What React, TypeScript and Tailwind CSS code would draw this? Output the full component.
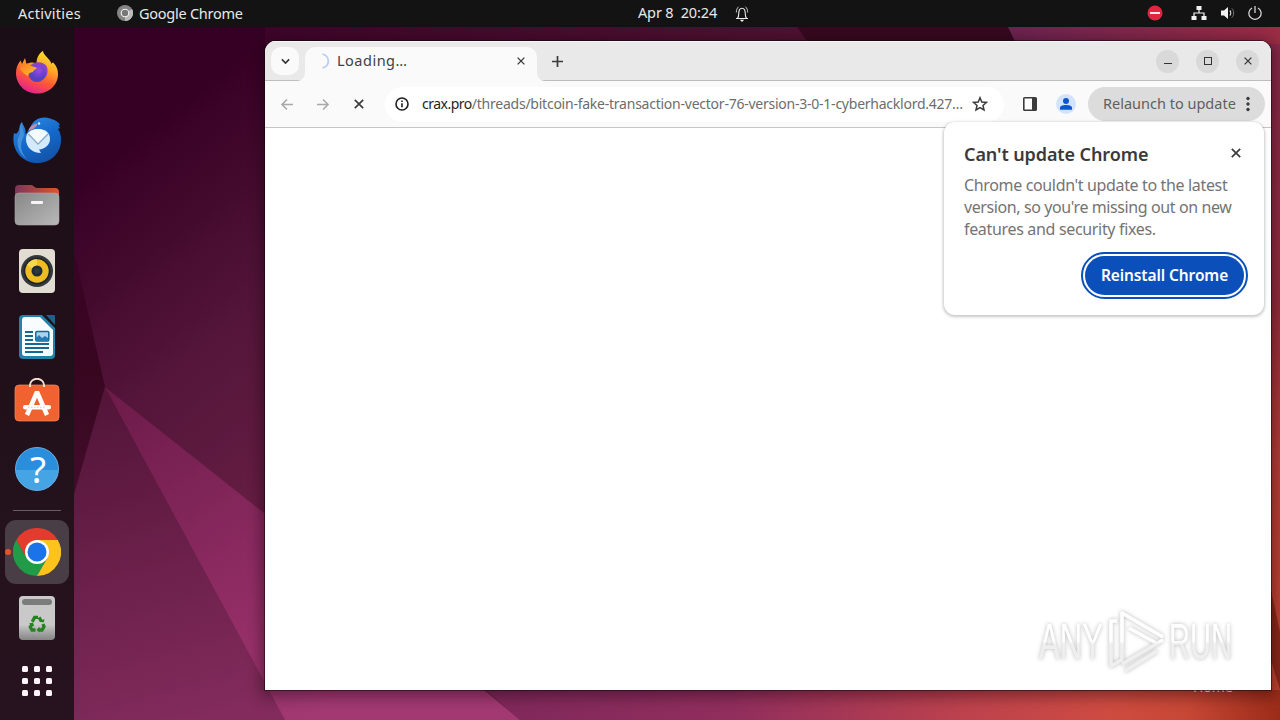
import type { ReactNode } from 'react';

const Wallpaper = () => (
  <svg className="absolute inset-0" width="1280" height="720" viewBox="0 0 1280 720">
    <defs>
      <linearGradient id="wall-base" gradientUnits="userSpaceOnUse" x1="120" y1="150" x2="430" y2="550">
        <stop offset="0" stopColor="#360024" />
        <stop offset=".4" stopColor="#531539" />
        <stop offset="1" stopColor="#75244c" />
      </linearGradient>
      <linearGradient id="wall-low" gradientUnits="userSpaceOnUse" x1="110" y1="400" x2="200" y2="720">
        <stop offset="0" stopColor="#541539" />
        <stop offset="1" stopColor="#822b5c" />
      </linearGradient>
      <linearGradient id="wall-wedge" gradientUnits="userSpaceOnUse" x1="110" y1="390" x2="320" y2="710">
        <stop offset="0" stopColor="#6c1b49" />
        <stop offset=".7" stopColor="#932e66" />
        <stop offset="1" stopColor="#a23973" />
      </linearGradient>
      <linearGradient id="wall-top" x1="0" x2="1" y1="0" y2="0">
        <stop offset="0" stopColor="#3e0529" />
        <stop offset="1" stopColor="#501232" />
      </linearGradient>
      <linearGradient id="wall-top-right" x1="0" x2="1" y1="0" y2="0">
        <stop offset="0" stopColor="#6b2350" />
        <stop offset="1" stopColor="#9b2c45" />
      </linearGradient>
      <linearGradient id="wall-bottom" gradientUnits="userSpaceOnUse" x1="500" x2="1280" y1="0" y2="0">
        <stop offset="0" stopColor="#80285b" />
        <stop offset=".3" stopColor="#912e5d" />
        <stop offset=".6" stopColor="#bd424d" />
        <stop offset=".78" stopColor="#ce4b41" />
        <stop offset=".88" stopColor="#c74735" />
        <stop offset="1" stopColor="#9b2c18" />
      </linearGradient>
      <linearGradient id="wall-right" x1="0" x2="0" y1="0" y2="1">
        <stop offset="0" stopColor="#87294a" />
        <stop offset=".4" stopColor="#942c3c" />
        <stop offset=".65" stopColor="#b83e36" />
        <stop offset="1" stopColor="#c3442f" />
      </linearGradient>
      <linearGradient id="wall-shade" gradientUnits="userSpaceOnUse" x1="0" x2="0" y1="240" y2="500">
        <stop offset="0" stopColor="#3b0328" />
        <stop offset=".5" stopColor="#38061f" />
        <stop offset="1" stopColor="#420d2c" />
      </linearGradient>
    </defs>
    <rect width="1280" height="720" fill="url(#wall-base)" />
    <path d="M265 27H797L820 60H265Z" fill="url(#wall-top)" />
    <path d="M797 27H1010L1024 60H820Z" fill="#36091f" />
    <path d="M1008 27H1280V60H1024Z" fill="url(#wall-top-right)" />
    <path d="M0 0H74V250L105 387L74 495V720H0Z" fill="url(#wall-shade)" />
    <path d="M105 387L285 720H74V495Z" fill="url(#wall-low)" />
    <path d="M105 387L400 621L520 720H285Z" fill="url(#wall-wedge)" />
    <path d="M487 690L520 720H1280V680H476Z" fill="url(#wall-bottom)" />
    <path d="M1260 44H1280V690H1260Z" fill="url(#wall-right)" />
    <path d="M1271 590L1280 632V690L1271 660Z" fill="#8c2818" />
  </svg>
);

const BellIcon = () => (
  <svg width="16" height="18" viewBox="0 0 16 18" fill="none" stroke="#eee" strokeWidth="1.1">
    <path d="M2 13.500h12M3.500 13.300c1-1 1.200-2.200 1.200-4.300C4.700 5 5.600 3.200 8 3.200S11.300 5 11.300 9c0 2.100.2 3.300 1.200 4.300" />
    <path d="M2.300 7.500C2.400 4.800 3.100 3 4.600 1.700M13.700 7.500C13.600 4.800 12.900 3 11.400 1.700" strokeWidth=".8" />
    <path d="M5.800 14.800h4.400L8 17Z" fill="#eee" stroke="none" />
  </svg>
);

const TopBar = () => (
  <header className="relative flex h-[27px] items-center bg-[#131313] text-[14.5px] text-[#e8e8e8]">
    <div className="flex w-[638px] items-center pl-[18px]">
      <span className="w-[99px] tracking-[0.25px]">Activities</span>
      <svg width="16" height="16" viewBox="0 0 16 16" className="mr-[6px] -translate-y-px">
        <circle cx="8" cy="8" r="8" fill="#858585" />
        <path d="M8 8L15 4A8 8 0 0 1 8 16Z" fill="#bababa" />
        <circle cx="8" cy="8" r="3.800" fill="#777" stroke="#f4f4f4" strokeWidth="1.100" />
      </svg>
      <span className="tracking-[-0.25px]">Google Chrome</span>
    </div>
    <div className="flex flex-1 items-center gap-[16px]">
      <span className="-mt-px w-[80px] whitespace-pre tracking-[-0.15px]">Apr 8  20:24</span>
      <BellIcon />
    </div>
    <div className="-mt-px flex items-center pr-[18px]">
      <svg width="16" height="16" viewBox="0 0 16 16" className="mr-[28px]">
        <circle cx="8" cy="8" r="7.500" fill="#df2540" />
        <path d="M3 8H13" stroke="#fff" strokeWidth="1.800" />
      </svg>
      <svg width="16" height="16" viewBox="0 0 16 16" className="mr-[13px]" fill="#f2f2f2">
        <path d="M5.500 1h5v4h-5zM.500 11h5v4h-5zM10.500 11h5v4h-5z" />
        <path d="M8 5v3M3 11V8h10v3" fill="none" stroke="#f2f2f2" strokeWidth="1.200" />
      </svg>
      <svg width="16" height="16" viewBox="0 0 16 16" className="mr-[12px]" fill="none">
        <path d="M1 5.500h3L8 2v12L4 10.500H1Z" fill="#f2f2f2" />
        <path d="M9.800 5.500c1.300 1.300 1.300 3.700 0 5" stroke="#ddd" strokeWidth="1.100" />
        <path d="M11.800 3.400c2.500 2.400 2.500 6.800 0 9.200" stroke="#777" />
      </svg>
      <svg width="14" height="16" viewBox="0 0 14 16" fill="none" stroke="#e2e2e2" strokeWidth="1.200">
        <path d="M4 3A6.100 6.100 0 1 0 10 3M7 1V8" />
      </svg>
    </div>
  </header>
);

const FirefoxIcon = () => (
  <svg width="44" height="44" viewBox="0 0 44 44" className="-translate-y-px">
    <defs>
      <linearGradient id="ff-body" x1=".8" y1="0" x2=".35" y2="1">
        <stop offset="0" stopColor="#ffe936" />
        <stop offset=".35" stopColor="#ffab24" />
        <stop offset=".65" stopColor="#ff5b35" />
        <stop offset="1" stopColor="#e6208d" />
      </linearGradient>
      <radialGradient id="ff-globe" cx=".6" cy=".3">
        <stop offset="0" stopColor="#9f45ee" />
        <stop offset="1" stopColor="#5542bf" />
      </radialGradient>
      <linearGradient id="ff-tail" x1="0" y1="0" x2="1" y2="1">
        <stop offset="0" stopColor="#ff7a25" />
        <stop offset="1" stopColor="#ffc629" />
      </linearGradient>
    </defs>
    <path d="M22 43.500C10 43.500 1 34.500 1 23c0-5 1.600-9 4.600-12.500L7 14l3-6 1.500 6c3.500-1.800 6.500-2 10-.6C21.700 8 23.500 3.800 28 .8c.3 5 6.200 6.600 8.500 13l1.500-1.600c3.500 3.600 5 7 5 12C43 35 34 43.500 22 43.500Z" fill="url(#ff-body)" />
    <path d="M15 16c3-4 10-5.500 15-1.500 3 2.500 3.500 8 1 12-2.500 4-8 5.500-12.500 3-4.500-2.500-6-9-3.500-13.500Z" fill="#8a45c4" />
    <circle cx="22" cy="23.500" r="8.600" fill="url(#ff-globe)" />
    <path d="M5 19c2-5 7-7 10.500-3.500 2 1.500 5 .7 6.500 2.800-1.800 1.300-3.500 1.800-4.500 4-2 .2-4.300 1-4.300 3.600-2.700-1-6-3-8.200-6.900Z" fill="url(#ff-tail)" />
  </svg>
);

const ThunderbirdIcon = () => (
  <svg width="50" height="48" viewBox="0 0 50 48" className="translate-y-px">
    <defs>
      <linearGradient id="tb-body" x1=".2" y1="0" x2=".7" y2="1">
        <stop offset="0" stopColor="#3289df" />
        <stop offset=".5" stopColor="#1269cb" />
        <stop offset="1" stopColor="#1452a4" />
      </linearGradient>
    </defs>
    <path d="M10 6C6 10 9 14 4 18l-2-1c-3 14 5 29 22 30 15 .6 25-10 25-23 0-5-1-8-3-11l2-1-1.500-2.500L48 9c-2-4-6-5.500-10-6.500C29-.5 21 4 18.500 11 17 14 16 14 15 17l-2 1c2-5-2-8-3-12Z" fill="url(#tb-body)" />
    <path d="M10 6C6 12 10 16 6 22c-2 8 2 17 9 21-7-7-7-15-4-21 3-6-2-9-1-16Z" fill="#438fd8" />
    <path d="M24 7.500c-3 .5-7 4-7.500 7 4-.5 6.500-2.500 8.500-5 .5-1 0-2-1-2Z" fill="#b78fb0" />
    <circle cx="27" cy="7.500" r="1.200" fill="#d1edff" />
    <path d="M14 23c0-6 4-10 12-10s12 4 12 10-5 10-11 10.500L29 37C20 37 14 31 14 23Z" fill="#d3eafb" />
    <path d="M16.500 18l9.500 10L36 18" fill="none" stroke="#8aa5bd" strokeWidth="1.300" />
    <path d="M17 17.500c4-6 14-6 18 0L26 27Z" fill="#f4fbff" />
  </svg>
);

const FilesIcon = () => (
  <svg width="46" height="42" viewBox="0 0 46 42">
    <defs>
      <linearGradient id="files-back" x1="0" x2="1">
        <stop offset="0" stopColor="#79375a" />
        <stop offset="1" stopColor="#e15429" />
      </linearGradient>
      <linearGradient id="files-front" x1="0" y1="0" x2="1" y2="1">
        <stop offset="0" stopColor="#888" />
        <stop offset="1" stopColor="#b8b8b8" />
      </linearGradient>
    </defs>
    <path d="M1 5a4 4 0 0 1 4-4h12c3 0 3 3 6 3h18a4 4 0 0 1 4 4v20H1Z" fill="url(#files-back)" />
    <rect x="1" y="9" width="44" height="32" rx="4" fill="url(#files-front)" stroke="#aaa" strokeWidth=".600" />
    <rect x="17" y="17" width="12" height="3" rx="1" fill="#f5f5f5" />
  </svg>
);

const SpeakerIcon = () => (
  <svg width="38" height="46" viewBox="0 0 38 46">
    <rect x="1" y="1" width="36" height="44" rx="4" fill="#e2ddd2" />
    <circle cx="19" cy="23" r="16" fill="#34393c" />
    <circle cx="19" cy="23" r="13.500" fill="#202527" />
    <circle cx="19" cy="23" r="11.700" fill="#efbd22" />
    <path d="M19 23L9 17A11.700 11.700 0 0 1 19 11.300Z" fill="#f8d750" />
    <circle cx="19" cy="23" r="5.500" fill="#202c37" />
    <circle cx="19" cy="23" r="2.800" fill="#2d3a45" />
  </svg>
);

const WriterIcon = () => (
  <svg width="38" height="46" viewBox="0 0 38 46">
    <path d="M5 1h19l13 13v27a4 4 0 0 1-4 4H5a4 4 0 0 1-4-4V5a4 4 0 0 1 4-4Z" fill="#2481aa" />
    <path d="M4 6a3 3 0 0 1 3-3h15l13 13v23a3 3 0 0 1-3 3H7a3 3 0 0 1-3-3Z" fill="#f8fcfe" />
    <path d="M28 1h8a1 1 0 0 1 1 1v9Z" fill="#1b638c" />
    <path d="M7 18h8M7 22h8M7 26h8M7 30h24M7 34h24M7 38h18" stroke="#176891" strokeWidth="1.800" />
    <rect x="17.800" y="17.500" width="13" height="9.500" rx="1" fill="#a8d5ee" stroke="#176891" strokeWidth="1.500" />
    <path d="M18 27v-3l3-3 3 3 3-2 3 2v3Z" fill="#227cad" />
  </svg>
);

const SoftwareIcon = () => (
  <svg width="46" height="44" viewBox="0 0 46 44" className="-translate-y-[2px]">
    <rect x="1" y="7" width="44" height="36" rx="4" fill="#f0622f" stroke="#ff865b" strokeWidth=".700" />
    <path d="M16 9V7a7 6.200 0 0 1 14 0v2" fill="none" stroke="#f9ded1" strokeWidth="1.900" />
    <path d="M13 37L23 14L33 37" fill="none" stroke="#fff" strokeWidth="4.500" strokeLinejoin="bevel" />
    <rect x="9" y="27" width="28" height="4.500" rx="2" fill="#fff" />
    <path d="M14 29.300h18" stroke="#ef9b7c" strokeWidth=".600" strokeDasharray="1.500 1.500" />
  </svg>
);

const HelpIcon = () => (
  <div className="flex h-[44px] w-[44px] items-center justify-center rounded-full border border-[#66aee4] bg-linear-to-b from-[#2b8edc] from-52% to-[#45a4e4] to-52% text-[37px] leading-none text-white">
    <span className="translate-x-px">?</span>
  </div>
);

const ChromeIcon = () => (
  <svg width="48" height="48" viewBox="0 0 48 48">
    <path d="M3.200 12A24 24 0 0 1 44.800 12H24L13.600 30Z" fill="#e33b2e" />
    <path d="M3.200 12A24 24 0 0 0 24 48L34.400 30L13.600 30Z" fill="#229b48" />
    <path d="M44.800 12A24 24 0 0 1 24 48L34.400 30L24 12Z" fill="#fcc31e" />
    <circle cx="24" cy="24" r="12" fill="#fff" />
    <circle cx="24" cy="24" r="9.500" fill="#1a73e8" />
  </svg>
);

const TrashIcon = () => (
  <div className="flex h-[44px] w-[36px] flex-col items-center rounded-[4px] bg-linear-to-b from-[#c9c9c9] from-65% to-[#858585] pt-[3px]">
    <div className="h-[6px] w-[30px] rounded-[3px] bg-[#7c7c7c]" />
    <svg width="18" height="18" viewBox="0 0 18 18" className="mt-[10px]" fill="none" stroke="#248220" strokeWidth="3.300">
      <path d="M4.300 6.700L6.600 2.300H10M11 2.300L13.500 6.500M15 9l1 2.500-2 3.500h-3M7.500 15H4L2.300 12l2-3.200" />
      <path d="M11.200 6.500l4.500 1 .8-3.500ZM11.500 11.500L8.500 15l3 2.500ZM1 8.500l4-1 1 4Z" fill="#248220" stroke="none" />
    </svg>
  </div>
);

const GridIcon = () => (
  <div className="grid grid-cols-3 gap-[6px]">
    {Array.from({ length: 9 }, (_, i) => (
      <span key={i} className="h-[6px] w-[6px] rounded-[1.5px] bg-[#fff4fa]" />
    ))}
  </div>
);

const DockItem = ({ children }: { children: ReactNode }) => (
  <div className="flex h-[66px] w-full items-center justify-center">{children}</div>
);

const Dock = () => (
  <nav className="relative flex h-[693px] w-[74px] flex-col items-center bg-linear-to-b from-[#1b0d15] to-[#27131f] pt-[13px]">
    <DockItem><FirefoxIcon /></DockItem>
    <DockItem><ThunderbirdIcon /></DockItem>
    <DockItem><FilesIcon /></DockItem>
    <DockItem><SpeakerIcon /></DockItem>
    <DockItem><WriterIcon /></DockItem>
    <div className="flex h-[63px] items-center"><SoftwareIcon /></div>
    <div className="flex h-[71px] items-center"><HelpIcon /></div>
    <div className="flex h-[16px] items-center">
      <div className="h-px w-[48px] -translate-y-[2px] bg-[#675d63]" />
    </div>
    <div className="relative flex h-[64px] w-[64px] items-center justify-center rounded-[11px] bg-[#493e46]">
      <span className="absolute left-0 top-[29px] h-[6px] w-[6px] rounded-full bg-[#e95420]" />
      <ChromeIcon />
    </div>
    <div className="flex h-[68px] items-center"><TrashIcon /></div>
    <div className="flex h-[58px] items-center"><GridIcon /></div>
  </nav>
);

const CloseIcon = ({ size }: { size: number }) => (
  <svg width={size} height={size} viewBox="0 0 10 10" stroke="#3c3c3c" strokeWidth="1.700">
    <path d="M.8 .8L9.200 9.200M9.200 .8L.8 9.200" />
  </svg>
);

const TabStrip = () => (
  <div className="flex h-[40px] border-b border-[#bdbdbd] bg-[#e9e9e9] shadow-[inset_0_1px_0_#f7f7f7]">
    <div className="ml-[6px] mt-[6px] flex h-[28px] w-[28px] items-center justify-center rounded-[10px] bg-[#fafafa]">
      <svg width="9" height="7" viewBox="0 0 10 7" fill="none" stroke="#333" strokeWidth="1.800">
        <path d="M1 1.200L5 5.200L9 1.200" />
      </svg>
    </div>
    <div className="relative ml-[6px] mt-[6px] flex h-[34px] w-[232px] items-center rounded-t-[10px] bg-[#fafafa] pb-[6px] pl-[10px] pr-[12px]">
      <svg width="8" height="8" viewBox="0 0 8 8" className="absolute -left-[8px] bottom-0">
        <path d="M8 0V8H0A8 8 0 0 0 8 0Z" fill="#fafafa" />
      </svg>
      <svg width="8" height="8" viewBox="0 0 8 8" className="absolute -right-[8px] bottom-0">
        <path d="M0 0V8H8A8 8 0 0 1 0 0Z" fill="#fafafa" />
      </svg>
      <svg width="16" height="16" viewBox="0 0 16 16" fill="none" stroke="#b6cdf5" strokeWidth="1.800">
        <path d="M7.500 1.100A7 7 0 0 1 7.500 14.900" />
      </svg>
      <span className="ml-[6px] flex-1 text-[14.5px] tracking-[0.5px] text-[#414141]">Loading…</span>
      <CloseIcon size={8} />
    </div>
    <svg width="11" height="11" viewBox="0 0 11 11" className="ml-[15px] mt-[15px]" stroke="#3c3c3c" strokeWidth="1.700">
      <path d="M5.500 0V11M0 5.500H11" />
    </svg>
    <div className="ml-auto mr-[12px] mt-[9px] flex gap-[17px]">
      <span className="flex h-[23px] w-[23px] items-center justify-center rounded-full bg-[#d9d9d9]">
        <span className="mt-[4px] h-px w-[8px] bg-[#333]" />
      </span>
      <span className="flex h-[23px] w-[23px] items-center justify-center rounded-full bg-[#d9d9d9]">
        <span className="h-[8px] w-[8px] -translate-y-px border border-[#333]" />
      </span>
      <span className="flex h-[23px] w-[23px] items-center justify-center rounded-full bg-[#d9d9d9]">
        <span className="flex -translate-y-px"><CloseIcon size={8} /></span>
      </span>
    </div>
  </div>
);

const Toolbar = () => (
  <div className="flex h-[47px] items-center border-b border-[#c6c6c6] bg-[#fafafa] pl-[15px] pr-[6px]">
    <svg width="13" height="13" viewBox="0 0 13 13" fill="none" stroke="#a9a9a9" strokeWidth="1.600">
      <path d="M13 6.500H2M7 1.500L2 6.500L7 11.500" />
    </svg>
    <svg width="13" height="13" viewBox="0 0 13 13" className="ml-[24px]" fill="none" stroke="#a9a9a9" strokeWidth="1.600">
      <path d="M0 6.500H11M6 1.500L11 6.500L6 11.500" />
    </svg>
    <span className="ml-[24px]"><CloseIcon size={10} /></span>
    <div className="ml-[21px] flex h-[35px] w-[619px] items-center rounded-full bg-white pl-[10px] pr-[16px]">
      <svg width="14" height="14" viewBox="0 0 14 14" fill="none" stroke="#1f1f1f" strokeWidth="1.600">
        <circle cx="7" cy="7" r="6" />
        <path d="M7 6.300V10.300M7 3.500V5" />
      </svg>
      <span className="-mt-px ml-[13px] w-[550px] whitespace-nowrap text-[14px] tracking-[-0.24px] text-[#6d6d6d]">
        <span className="tracking-[-0.5px] text-[#1f1f1f]">crax.pro</span>/threads/bitcoin-fake-transaction-vector-76-version-3-0-1-cyberhacklord.427…
      </span>
      <svg width="16" height="16" viewBox="0 0 16 16" className="shrink-0" fill="none" stroke="#3c3c3c" strokeWidth="1.500">
        <path d="M8 1.700L9.800 6L14.500 6.400L11 9.500L12 14L8 11.600L4 14L5 9.500L1.500 6.400L6.200 6Z" />
      </svg>
    </div>
    <svg width="14" height="14" viewBox="0 0 14 14" className="ml-[19px]">
      <rect x=".8" y=".8" width="12.400" height="12.400" rx=".800" fill="#fff" stroke="#3c3c3c" strokeWidth="1.600" />
      <path d="M9 1h4.500v12H9Z" fill="#3c3c3c" />
    </svg>
    <svg width="20" height="20" viewBox="0 0 20 20" className="ml-[19px]">
      <circle cx="10" cy="10" r="10" fill="#d3e3fd" />
      <circle cx="10" cy="7" r="3" fill="#0b57d0" />
      <path d="M4 15.800V14c0-2.200 3-3 6-3s6 .8 6 3v1.800Z" fill="#0b57d0" />
    </svg>
    <div className="ml-auto flex h-[34px] w-[177px] items-center rounded-full bg-[#dcdcdc] pl-[15px] text-[14.5px] text-[#5f5f5f]">
      <span className="w-[143px] whitespace-nowrap">Relaunch to update</span>
      <svg width="4" height="16" viewBox="0 0 4 16" fill="#3c3c3c">
        <circle cx="2" cy="2.500" r="1.700" />
        <circle cx="2" cy="8" r="1.700" />
        <circle cx="2" cy="13.500" r="1.700" />
      </svg>
    </div>
  </div>
);

const UpdateDialog = () => (
  <section className="absolute left-[679px] top-[81px] h-[193px] w-[320px] rounded-[11px] bg-white px-[20px] pt-[20px] shadow-[0_1px_3px_1px_rgba(0,0,0,0.22)]">
    <div className="flex h-[24px] items-start justify-between">
      <h2 className="whitespace-nowrap text-[18px] font-semibold leading-[24px] tracking-[-0.1px] text-[#3a3a3a]">Can't update Chrome</h2>
      <span className="mr-[3px] mt-[6px] flex"><CloseIcon size={10} /></span>
    </div>
    <p className="mt-[8px] whitespace-nowrap text-[16px] leading-[22px] tracking-[-0.4px] text-[#747474]">
      <span className="tracking-[-0.35px]">Chrome couldn't update to the latest</span>
      <br />
      version, so you're missing out on new
      <br />
      <span className="tracking-[-0.33px]">features and security fixes.</span>
    </p>
    <button className="ml-auto mt-[16px] flex h-[39px] w-[159px] items-center justify-center whitespace-nowrap rounded-full bg-[#0b50ba] text-[15.5px] font-semibold tracking-[-0.1px] text-white outline-2 outline-offset-2 outline-[#0b50ba]">
      Reinstall Chrome
    </button>
  </section>
);

const Watermark = () => (
  <svg width="220" height="76" viewBox="0 0 220 76" className="absolute left-[768px] top-[562px] drop-shadow-[0_0_2px_rgba(0,0,0,0.28)]">
    <defs>
      <linearGradient id="mark-fill" gradientUnits="userSpaceOnUse" x1="0" x2="0" y1="0" y2="76">
        <stop offset=".5" stopColor="#fff" />
        <stop offset=".54" stopColor="#efefef" />
      </linearGradient>
    </defs>
    <g fill="url(#mark-fill)" className="font-['Liberation_Sans_Narrow','Liberation_Sans',sans-serif]" fontSize="50">
      <text x="6" y="56" textLength="64" lengthAdjust="spacingAndGlyphs">ANY</text>
      <text x="136" y="56" textLength="63" lengthAdjust="spacingAndGlyphs">RUN</text>
    </g>
    <g fill="none" stroke="url(#mark-fill)" strokeWidth="3.600" strokeLinejoin="round">
      <path d="M89 56V10L130 34" />
      <path d="M96 25L123 40M130 37L89 61M124 48L92 68" />
      <path d="M84 18H78V63L90 56" />
    </g>
  </svg>
);

const BrowserWindow = () => (
  <main className="absolute left-[265px] top-[41px] h-[649px] w-[1006px] rounded-t-[11px] bg-white shadow-[0_0_0_1px_rgba(20,0,10,0.5),0_3px_14px_4px_rgba(20,0,10,0.4)]">
    <div className="overflow-hidden rounded-t-[11px]">
      <TabStrip />
      <Toolbar />
    </div>
    <UpdateDialog />
    <Watermark />
  </main>
);

const App = () => (
  <div className="relative h-[720px] w-[1280px] overflow-hidden bg-[#35062a] font-['Noto_Sans',sans-serif]">
    <Wallpaper />
    <TopBar />
    <Dock />
    <span className="absolute left-[1193px] top-[677px] text-[14px] leading-[20px] text-[#eee]">Home</span>
    <BrowserWindow />
  </div>
);

export default App;
